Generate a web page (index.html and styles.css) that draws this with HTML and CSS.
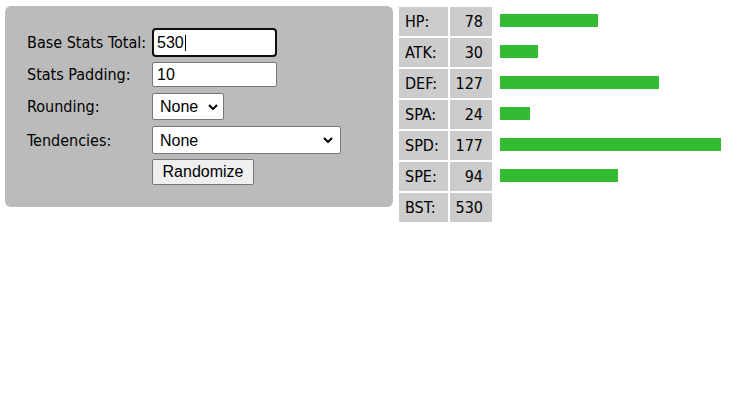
FILE: index.html
```html
<!DOCTYPE html>
<html>
<head>
<meta charset="utf-8">
<link rel="stylesheet" href="styles.css">
</head>
<body>
<div class="page">
  <div class="panel">
    <div class="form">
      <label class="lbl">Base Stats Total:</label>
      <div class="ctl caretwrap"><input class="inp focused" type="text" value="530"><span class="caret"></span></div>
      <label class="lbl">Stats Padding:</label>
      <div class="ctl"><input class="inp" type="text" value="10"></div>
      <label class="lbl">Rounding:</label>
      <div class="ctl"><div class="sel sel-small"><select><option>None</option></select><svg class="chev" width="10" height="6" viewBox="0 0 10 6"><path d="M1 1 L5 5 L9 1" fill="none" stroke="#000" stroke-width="2"/></svg></div></div>
      <label class="lbl">Tendencies:</label>
      <div class="ctl"><div class="sel sel-wide"><select><option>None</option></select><svg class="chev" width="10" height="6" viewBox="0 0 10 6"><path d="M1 1 L5 5 L9 1" fill="none" stroke="#000" stroke-width="2"/></svg></div></div>
      <span class="lbl"></span>
      <div class="ctl"><button class="btn" type="button">Randomize</button></div>
    </div>
  </div>
  <table class="stats">
    <tr><td class="name">HP:</td><td class="val">78</td><td class="barcell"><div class="bar" style="width:98px"></div></td></tr>
    <tr><td class="name">ATK:</td><td class="val">30</td><td class="barcell"><div class="bar" style="width:38px"></div></td></tr>
    <tr><td class="name">DEF:</td><td class="val">127</td><td class="barcell"><div class="bar" style="width:159px"></div></td></tr>
    <tr><td class="name">SPA:</td><td class="val">24</td><td class="barcell"><div class="bar" style="width:30px"></div></td></tr>
    <tr><td class="name">SPD:</td><td class="val">177</td><td class="barcell"><div class="bar" style="width:221px"></div></td></tr>
    <tr><td class="name">SPE:</td><td class="val">94</td><td class="barcell"><div class="bar" style="width:118px"></div></td></tr>
    <tr><td class="name">BST:</td><td class="val">530</td><td class="barcell"></td></tr>
  </table>
</div>
</body>
</html>
```
FILE: styles.css
```css
html, body {
  margin: 0;
  padding: 0;
  background: #fff;
}
body {
  font-family: "DejaVu Sans Condensed", "DejaVu Sans", sans-serif;
  font-stretch: condensed;
  font-size: 16px;
  color: #000;
}
.page {
  display: flex;
  align-items: flex-start;
  padding: 5px 0 0 5px;
}
.panel {
  margin-top: 1px;
  width: 388px;
  box-sizing: border-box;
  padding: 22px 22px 22px 22px;
  background: #bbbbbb;
  border-radius: 6px;
}
.form {
  display: grid;
  grid-template-columns: 125px auto;
  align-items: center;
}
.lbl {
  display: block;
  line-height: 19px;
}
.ctl {
  display: flex;
}
.caretwrap {
  position: relative;
}
.caret {
  position: absolute;
  left: 33px;
  top: 7px;
  width: 1px;
  height: 16px;
  background: #000;
}
.form > :nth-child(4), .form > :nth-child(3) { margin-top: 5px; }
.form > :nth-child(5), .form > :nth-child(6) { margin-top: 6px; }
.form > :nth-child(7), .form > :nth-child(8) { margin-top: 6px; }
.form > :nth-child(9), .form > :nth-child(10) { margin-top: 5px; }
.inp {
  box-sizing: border-box;
  width: 125px;
  height: 25px;
  margin: 0;
  padding: 0 4px;
  border: 1px solid #767676;
  border-radius: 2px;
  background: #fff;
  font-family: "Liberation Sans", Arial, sans-serif;
  font-size: 16px;
  color: #000;
  outline: none;
}
.inp.focused {
  height: 29px;
  border: 2px solid #101010;
  border-radius: 4px;
  box-shadow: inset 0 0 0 1px #fff;
  padding: 0 3px;
}
.sel {
  position: relative;
  display: flex;
}
.sel select {
  appearance: none;
  -webkit-appearance: none;
  box-sizing: border-box;
  margin: 0;
  padding: 0 0 0 7px;
  border: 1px solid #767676;
  border-radius: 2px;
  background: #fff;
  font-family: "Liberation Sans", Arial, sans-serif;
  font-size: 16px;
  color: #000;
  outline: none;
}
.sel-small select { width: 72px; height: 27px; }
.sel-wide select { width: 189px; height: 28px; }
.chev {
  position: absolute;
  top: 50%;
  margin-top: -3px;
  pointer-events: none;
}
.sel-small .chev { right: 6px; }
.sel-wide .chev { right: 8px; }
.btn {
  box-sizing: border-box;
  width: 102px;
  height: 26px;
  margin: 0;
  padding: 0;
  border: 1px solid #767676;
  border-radius: 2px;
  background: #efefef;
  font-family: "Liberation Sans", Arial, sans-serif;
  font-size: 16px;
  color: #000;
}
.stats {
  margin-left: 4px;
  border-collapse: separate;
  border-spacing: 2px;
}
.stats td {
  height: 29px;
  padding: 0;
  box-sizing: border-box;
}
.name {
  width: 49px;
  background: #cccccc;
  padding-left: 6px !important;
  text-align: left;
}
.val {
  width: 42px;
  background: #cccccc;
  padding-right: 9px !important;
  text-align: right;
}
.barcell {
  width: 236px;
  padding-left: 6px !important;
  vertical-align: top;
}
.bar {
  height: 13px;
  margin-top: 7px;
  background: #33bb33;
}
```
